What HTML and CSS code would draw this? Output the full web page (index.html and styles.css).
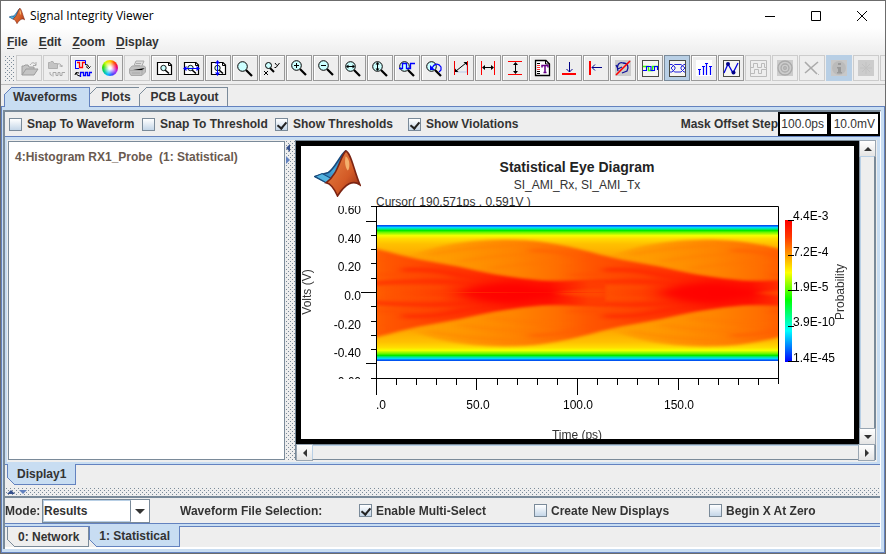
FILE: index.html
```html
<!DOCTYPE html>
<html lang="en">
<head>
<meta charset="utf-8">
<title>Signal Integrity Viewer</title>
<link rel="stylesheet" href="styles.css">
</head>
<body>
<svg class="defs" aria-hidden="true">
  <defs>
    <linearGradient id="wing" x1="0" y1="1" x2="1" y2="0"><stop offset="0" stop-color="#1c5f9c"/><stop offset=".5" stop-color="#46a8dc"/><stop offset="1" stop-color="#1d64a8"/></linearGradient>
    <linearGradient id="peak" x1="0" y1="0" x2="1" y2="1"><stop offset="0" stop-color="#e88a4a"/><stop offset=".6" stop-color="#d35a26"/><stop offset="1" stop-color="#8c2410"/></linearGradient>
    <symbol id="logo" viewBox="0 0 46 46">
      <path d="M1 26L14 22C20 19 26 4 31 1C30 14 24 22 12 32Z" fill="url(#wing)" stroke="#174a7c" stroke-width="1.5"/>
      <path d="M1 26L8 23L17 28L12 32Z" fill="#54b4e0" stroke="#174a7c"/>
      <path d="M31 1C36 2 39 20 45 34C38 29 31 33 23 45C20 38 17 33 12 32C24 23 25 8 31 1Z" fill="url(#peak)" stroke="#7c2412" stroke-width="1.6"/>
      <path d="M31 6C36 9 35 19 33 20C30 16 30 10 31 6Z" fill="#f4b06c"/>
    </symbol>
    <symbol id="mag" viewBox="0 0 26 26">
      <path d="M14 14L20 20" stroke="#000" stroke-width="2.2"/>
      <circle cx="10.500" cy="10.500" r="4.800" fill="#cff" stroke="#000"/>
    </symbol>
    <symbol id="page" viewBox="0 0 26 26">
      <path d="M6.500 7.500H18L20.500 10V19.500H6.500Z" fill="#fff" stroke="#000" stroke-width="1.200"/>
      <path d="M17.500 7.500V10.500H20.500" fill="none" stroke="#000"/>
      <path d="M14 15L18 18.500" stroke="#000" stroke-width="1.600"/>
      <circle cx="12.500" cy="13" r="2.700" fill="#cff" stroke="#000" stroke-width=".9"/>
    </symbol>
    <symbol id="box" viewBox="0 0 26 26"><rect x="5.500" y="5.500" width="16" height="16" fill="#f6f6f2" stroke="#4a4a44"/></symbol>
  </defs>
</svg>
<div class="app">
  <header class="chrome">
    <div class="titlebar">
      <svg class="app-logo"><use href="#logo"/></svg>
      <h1>Signal Integrity Viewer</h1>
      <button class="win" aria-label="Minimize"><svg viewBox="0 0 12 12"><path d="M1 6.500H11"/></svg></button>
      <button class="win" aria-label="Maximize"><svg viewBox="0 0 12 12"><path d="M1.500 1.500H10.500V10.500H1.500Z"/></svg></button>
      <button class="win" aria-label="Close"><svg viewBox="0 0 12 12"><path d="M1 1L11 11M11 1L1 11"/></svg></button>
    </div>
    <nav class="menubar">
      <button><u>F</u>ile</button><button><u>E</u>dit</button><button><u>Z</u>oom</button><button><u>D</u>isplay</button>
    </nav>
  </header>

  <div class="toolbar" role="toolbar">
    <span class="grip"></span>
    <button disabled aria-label="Open"><svg viewBox="0 0 26 26"><path d="M6 20V11H8L9 10H12L13 12H18V14M6 20L10 14H22L18 20Z" fill="#c4c4c4" stroke="#9c9c9c"/><path d="M14 10C16 7 18 7 20 10M20 7V10.500H17" fill="none" stroke="#aaa"/></svg></button>
    <button disabled aria-label="Open waveform"><svg viewBox="0 0 26 26"><path d="M5.500 13.500V7.500H7L8 6.500H10L11 8.500H14.500V13.500Z" fill="#c4c4c4" stroke="#b0b0b0"/><path d="M15 9Q18 8 18.500 12M16.500 11H20M7 17Q6 20 9 20.500M10 21.500V17.500H13V20.500H15V17.500H17V20.500H19V17.500H22" fill="none" stroke="#a8a8a8"/></svg></button>
    <button aria-label="Reload waveform"><svg viewBox="0 0 26 26" fill="none"><path d="M5.500 13.500V5.500H15.500V9" stroke="#00f"/><path d="M5 13.500H9" stroke="#00f"/><path d="M7 7.500H9.500V12.500H12.500V7.500H15" stroke="red" stroke-width="1.300"/><path d="M15 9.500Q18.500 9 18.500 12M16 11.500L18.500 13.500L20.500 11.500M6 18Q7 21 10 21M5 20L6 17.500L9 18" stroke="#000"/><path d="M10.500 22V17.500H13.500V20.500H15.500V17.500H17.500V20.500H19.500V17.500H22" stroke="#00f" stroke-width="1.300"/></svg></button>
    <button aria-label="Colors"><span class="wheel"></span></button>
    <button disabled aria-label="Print"><svg viewBox="0 0 26 26" stroke="#aaa"><path d="M9 13L12 6H20L17 13Z" fill="#ddd"/><path d="M5.500 14L8 11H20L21.500 12V17L18 20.500H7L5.500 18Z" fill="#c0c0c0"/><path d="M6 15.500H18L21 13M18 15V20M12 8.500H17M11 10.500H16M8 18H16"/></svg></button>
    <button aria-label="Zoom fit"><svg viewBox="0 0 26 26"><use href="#page"/></svg></button>
    <button aria-label="Zoom fit X"><svg viewBox="0 0 26 26"><use href="#page"/><path d="M6 13.500H21" stroke="#00f"/><path d="M5 13.500L8.500 11V16ZM22 13.500L18.500 11V16Z" fill="#00f"/></svg></button>
    <button aria-label="Zoom fit Y"><svg viewBox="0 0 26 26"><use href="#page"/><path d="M12.500 7V20" stroke="#00f"/><path d="M12.500 5L10 8.500H15ZM12.500 21L10 17.500H15Z" fill="#00f"/></svg></button>
    <button aria-label="Zoom"><svg viewBox="0 0 26 26"><use href="#mag" y="1"/></svg></button>
    <button aria-label="Zoom XY"><svg viewBox="0 0 26 26" fill="none" stroke="#000"><path d="M11 13L15 17" stroke-width="2"/><circle cx="9.500" cy="10.500" r="3" fill="#cff"/><path d="M5 16L9 20M9 16L5 20M16 8L18 10.500M20.500 8L17 12.500H15.500"/></svg></button>
    <button aria-label="Zoom in"><svg viewBox="0 0 26 26"><use href="#mag"/><path d="M8 10.500H13M10.500 8V13" stroke="#000"/></svg></button>
    <button aria-label="Zoom out"><svg viewBox="0 0 26 26"><use href="#mag"/><path d="M8 10.500H13" stroke="#000"/></svg></button>
    <button aria-label="Zoom horizontally"><svg viewBox="0 0 26 26"><use href="#mag" y="1"/><path d="M7 11.500H14" stroke="#000"/><path d="M6 11.500L8.500 9.500V13.500ZM15 11.500L12.500 9.500V13.500Z"/></svg></button>
    <button aria-label="Zoom vertically"><svg viewBox="0 0 26 26"><use href="#mag" y="1"/><path d="M10.500 8V15" stroke="#000"/><path d="M10.500 7L8.500 9.500H12.500ZM10.500 16L8.500 13.500H12.500Z"/></svg></button>
    <button aria-label="Zoom to pulse"><svg viewBox="0 0 26 26"><use href="#mag" y="1"/><path d="M5 13.500H8.500V8.500H12.500V13.500H16.500V8.500H21" fill="none" stroke="#00f" stroke-width="1.300"/></svg></button>
    <button aria-label="Undo zoom"><svg viewBox="0 0 26 26"><use href="#mag" y="1"/><path d="M9 10V15H14Z" fill="#00f"/><path d="M11 13C13 9 17 7 20 12V15L18 17" fill="none" stroke="#00f" stroke-width="1.200"/></svg></button>
    <button aria-label="Measure"><svg viewBox="0 0 26 26" fill="none"><path d="M8 17H19V8" stroke="#b8c8e8"/><path d="M6.500 6V20M19.500 6V20" stroke="#e00"/><path d="M8 16L18 8" stroke="#000"/><path d="M7 17V13.500L10.500 17ZM19 7V10.500L15.500 7Z" fill="#000"/></svg></button>
    <button aria-label="Measure X"><svg viewBox="0 0 26 26"><path d="M6.500 6V20M19.500 6V20" stroke="red"/><path d="M8 12.500H18" stroke="#000"/><path d="M7 12.500L10 10V15ZM19 12.500L16 10V15Z"/></svg></button>
    <button aria-label="Measure Y"><svg viewBox="0 0 26 26"><path d="M6 6.500H20M6 19.500H20" stroke="red"/><path d="M13.500 8V18" stroke="#000"/><path d="M13.500 7L11 10H16ZM13.500 19L11 16H16Z"/></svg></button>
    <button aria-label="Text report"><svg viewBox="0 0 26 26"><path d="M6.500 5.500H17L20.500 9V20.500H6.500Z" fill="#fff" stroke="#000" stroke-width="1.300"/><path d="M16.500 5V9H21" fill="none" stroke="#000"/><path d="M8 8.500H11M8 16.500H11M8 18.500H11" stroke="#000"/><path d="M8 10.500H11M8 12.500H11M8 14.500H11" stroke="#f33"/><path d="M13 12.500V10.500H19V12.500M16 10.500V17M14.500 17.500H17.500" fill="none" stroke="#608" stroke-width="1.500"/></svg></button>
    <button aria-label="Snap down"><svg viewBox="0 0 26 26"><path d="M6 19H20" stroke="red" stroke-width="2"/><path d="M13.500 7V17M10.500 14L13.500 17L16.500 14" fill="none" stroke="#008"/></svg></button>
    <button aria-label="Snap left"><svg viewBox="0 0 26 26"><path d="M7 6V20" stroke="red" stroke-width="2"/><path d="M19 12.500H9M12 9.500L9 12.500L12 15.500" fill="none" stroke="#008"/></svg></button>
    <button aria-label="Clear rotation"><svg viewBox="0 0 26 26" fill="none"><path d="M5 5H21V21H5Z" fill="#ccc"/><path d="M8 16C6 9 10 7 13 8C18 8 19 12 17 16L12 18M6 10L8 14L12 12" stroke="#119" stroke-width="1.300"/><path d="M6 20L20 6" stroke="red" stroke-width="1.600"/></svg></button>
    <button aria-label="Waveform view"><svg viewBox="0 0 26 26" fill="none"><use href="#box"/><path d="M6 11.500H11.500V15.500H15.500V11.500H21" stroke="#3f0" stroke-width="1.400"/><path d="M6 15.500H9.500V11.500H14V15.500H17.500V11.500H20.500V15" stroke="#00f" stroke-width="1.100"/></svg></button>
    <button class="on" aria-label="Eye view"><svg viewBox="0 0 26 26" fill="none"><use href="#box"/><path d="M6 9.500H8L11 12V14L8 17H6M21 9.500H20L17 12V14L20 17H21M7 13L10.500 9.500H17L21 13M7 13L10.500 17H17L21 13" stroke="#22d"/></svg></button>
    <button aria-label="Stem view"><svg viewBox="0 0 26 26"><path d="M5 5H21V21H5Z" fill="#fff"/><path d="M8.500 20V14M12.500 20V11M15.500 20V8M19.500 20V11M7 14.500H10M11 11.500H14M14 8.500H17M18 11.500H21" stroke="#00f" stroke-width="1.200"/></svg></button>
    <button aria-label="Line view"><svg viewBox="0 0 26 26"><use href="#box"/><path d="M6 18L10 9L15 18L20 8" fill="none" stroke="#00d" stroke-width="1.300"/><circle cx="10" cy="9" r="2" fill="#008"/><circle cx="15.500" cy="17.500" r="2" fill="#008"/></svg></button>
    <button disabled aria-label="Pattern"><svg viewBox="0 0 26 26" fill="none" stroke="#bbb"><path d="M5.500 5.500H21.500V21.500H5.500Z"/><path d="M6 12.500H8.500V8.500H12.500V12.500H16.500V8.500H19.500V12.500H21M6 18.500H9.500V14.500H13.500V18.500H16.500V14.500H21"/></svg></button>
    <button disabled aria-label="Target"><svg viewBox="0 0 26 26" fill="none"><path d="M5 5H21V21H5Z" fill="#ccc"/><g stroke="#aaa" stroke-width="1.300"><circle cx="13" cy="13" r="7"/><circle cx="13" cy="13" r="4"/><circle cx="13" cy="13" r="1.300"/></g></svg></button>
    <button disabled aria-label="Delete"><svg viewBox="0 0 26 26" fill="none"><path d="M6 7L18 19M19 7L6 18" stroke="#aaa" stroke-width="1.600"/><path d="M19 19.500H20" stroke="#bbb"/></svg></button>
    <button disabled class="on" aria-label="Information"><svg viewBox="0 0 26 26"><path d="M5 5H21V21H5Z" fill="#c8c8c8"/><circle cx="13" cy="13" r="7" fill="#bbb"/><path d="M12 8H15V10H12ZM11 12H15V17H16V18.500H11V17H12V13.500H11Z" fill="#999"/></svg></button>
    <button disabled aria-label="Stop"><svg viewBox="0 0 26 26"><path d="M5 5H21V21H5Z" fill="#ccc"/><path d="M9 9L17 17M17 9L9 17M13 7V19M7 13H19" stroke="#c2c2c2"/></svg></button>
    <button disabled aria-label="More"></button>
  </div>

  <div class="tabs top" role="tablist">
    <button class="tab active" role="tab">Waveforms</button><button class="tab" role="tab">Plots</button><button class="tab" role="tab">PCB Layout</button>
  </div>

  <main class="pane">
    <div class="inner">
      <div class="options">
        <label><input type="checkbox">Snap To Waveform</label>
        <label><input type="checkbox">Snap To Threshold</label>
        <label><input type="checkbox" checked>Show Thresholds</label>
        <label><input type="checkbox" checked>Show Violations</label>
        <div class="mask"><span>Mask Offset Step</span><input type="text" value="100.0ps" aria-label="Mask offset time"><input type="text" value="10.0mV" aria-label="Mask offset voltage"></div>
      </div>

      <section class="display">
        <div class="list">4:Histogram RX1_Probe&nbsp; (1: Statistical)</div>
        <div class="vsplit"><i class="arrow left"></i><i class="arrow right"></i></div>
        <div class="viewer">
          <div class="plot">
            <svg class="chart" viewBox="0 0 553 293" preserveAspectRatio="xMinYMin meet" role="img" aria-label="Statistical Eye Diagram">
              <defs>
                <linearGradient id="rows" x1="0" y1="75" x2="0" y2="483" gradientUnits="userSpaceOnUse">
                  <stop offset="0" stop-color="#0038e8"/><stop offset=".010" stop-color="#0080ff"/><stop offset=".018" stop-color="#00d8f8"/><stop offset=".030" stop-color="#00e890"/><stop offset=".040" stop-color="#00e800"/><stop offset=".055" stop-color="#70f800"/><stop offset=".078" stop-color="#f4ff00"/><stop offset=".100" stop-color="#ffdc00"/><stop offset=".140" stop-color="#ffc000"/><stop offset=".250" stop-color="#ffa000"/><stop offset=".500" stop-color="#ff8000"/>
                  <stop offset=".750" stop-color="#ffa000"/><stop offset=".860" stop-color="#ffc000"/><stop offset=".900" stop-color="#ffdc00"/><stop offset=".922" stop-color="#f4ff00"/><stop offset=".945" stop-color="#70f800"/><stop offset=".960" stop-color="#00e800"/><stop offset=".970" stop-color="#00e890"/><stop offset=".982" stop-color="#00d8f8"/><stop offset=".990" stop-color="#0080ff"/><stop offset="1" stop-color="#0038e8"/>
                </linearGradient>
                <linearGradient id="lens" x1="60" y1="0" x2="1260" y2="0" gradientUnits="userSpaceOnUse">
                  <stop offset="0" stop-color="#ffa600"/><stop offset=".150" stop-color="#ff9a00"/><stop offset=".300" stop-color="#ff8600"/><stop offset=".420" stop-color="#ff6e00"/><stop offset=".500" stop-color="#ff5600"/><stop offset=".600" stop-color="#ff4400"/><stop offset=".720" stop-color="#ff2e00"/><stop offset=".820" stop-color="#ff1800"/><stop offset=".900" stop-color="#ff1000"/><stop offset=".960" stop-color="#ff2800"/><stop offset="1" stop-color="#ff3c00"/>
                </linearGradient>
                <filter id="soft" x="-10%" y="-30%" width="120%" height="160%" color-interpolation-filters="sRGB"><feGaussianBlur stdDeviation="5"/></filter>
                <filter id="streak" x="-10%" y="-50%" width="120%" height="200%" color-interpolation-filters="sRGB"><feGaussianBlur stdDeviation="14 5"/></filter>
                <filter id="softer" x="-20%" y="-60%" width="140%" height="220%" color-interpolation-filters="sRGB"><feGaussianBlur stdDeviation="26 9"/></filter>
                <clipPath id="heatclip"><rect x="20" y="75" width="1205" height="408"/></clipPath>
                <clipPath id="above"><rect x="70" y="40" width="200" height="20"/></clipPath>
                <clipPath id="rowclip"><rect x="0" y="60" width="75" height="173"/></clipPath>
                <g id="wave">
                  <path d="M50 205C150 138 280 121 400 119C500 119 570 132 660 156C750 183 820 188 900 207C960 221 1040 236 1120 242C1180 244 1250 240 1310 246L1310 300L50 300Z" fill="url(#lens)" filter="url(#soft)"/>
                  <g fill="none" filter="url(#streak)">
                    <path d="M180 164Q300 140 430 137M270 184Q380 165 500 162" stroke="#ff7800" stroke-width="7" opacity=".400"/>
                    <path d="M360 205Q480 187 600 186" stroke="#ff7200" stroke-width="8" opacity=".350"/>
                    <path d="M480 152Q550 147 635 172" stroke="#ff5c00" stroke-width="12" opacity=".550"/>
                    <path d="M590 252Q680 244 780 244T960 256" stroke="#ff2400" stroke-width="14" opacity=".600"/>
                    <path d="M700 210Q790 206 860 222T980 242" stroke="#ff2000" stroke-width="14" opacity=".550"/>
                    <path d="M600 225Q680 222 750 224T840 236" stroke="#ff4c00" stroke-width="7" opacity=".500"/>
                    <path d="M640 270Q720 262 830 262" stroke="#ff5400" stroke-width="9" opacity=".500"/>
                  </g>
                  <path d="M860 279Q930 246 1030 246Q1110 256 1180 279Q1110 302 1030 312Q930 312 860 279Z" fill="#f00" opacity=".900" filter="url(#softer)"/>
                  <path d="M1160 279Q1220 268 1310 266V292Q1220 290 1160 279Z" fill="#ff4c00" opacity=".800" filter="url(#streak)"/>
                </g>
                <g id="half"><use href="#wave" x="604"/><use href="#wave"/><use href="#wave" x="-604"/></g>
                <clipPath id="halfclip"><rect x="0" y="60" width="1250" height="220"/></clipPath>
                <linearGradient id="scale" x1="0" y1="0" x2="0" y2="1"><stop offset="0" stop-color="red"/><stop offset=".120" stop-color="#ff3800"/><stop offset=".370" stop-color="#ff0"/><stop offset=".560" stop-color="#0f0"/><stop offset=".780" stop-color="#0ff"/><stop offset="1" stop-color="#00f"/></linearGradient>
              </defs>
              <use href="#logo" x="13" y="4" width="47" height="47"/>
              <text class="heading" x="276" y="26" text-anchor="middle">Statistical Eye Diagram</text>
              <text class="soft" x="276" y="43" text-anchor="middle">SI_AMI_Rx, SI_AMI_Tx</text>
              <g clip-path="url(#above)"><text class="soft" x="75" y="60">Cursor( 190.571ps , 0.591V )</text></g>
              <g transform="translate(69 54) scale(.33333)" clip-path="url(#heatclip)">
                <rect x="20" y="75" width="1205" height="408" fill="url(#rows)"/>
                <g clip-path="url(#halfclip)"><use href="#half"/></g>
                <g transform="translate(0 558) scale(1 -1)"><g clip-path="url(#halfclip)"><use href="#half"/></g></g>
              </g>
              <g class="axis">
                <path d="M70 60.500H477.500V238M75.500 60V249M70 232.500H478"/>
                <path d="M65 75.500H75M70 89.500H75M70 103.500H75M70 117.500H75M70 132.500H75M60 146.500H75M70 160.500H75M70 175.500H75M70 189.500H75M70 203.500H75M65 217.500H75"/>
                <path d="M95.500 232V239M115.500 232V239M135.500 232V239M155.500 232V239M175.500 232V244M196.500 232V239M216.500 232V239M236.500 232V239M256.500 232V239M276.500 232V249M296.500 232V239M316.500 232V239M336.500 232V239M357.500 232V239M377.500 232V244M397.500 232V239M417.500 232V239M437.500 232V239M457.500 232V239"/>
              </g>
              <g text-anchor="end" clip-path="url(#rowclip)">
                <text x="60" y="68">0.60</text><text x="60" y="97">0.40</text><text x="60" y="125">0.20</text><text x="60" y="154">0.0</text><text x="60" y="183">-0.20</text><text x="60" y="211">-0.40</text>
              </g>
              <svg x="30" y="230" width="40" height="3"><text x="30" y="10" text-anchor="end">-0.60</text></svg>
              <g text-anchor="middle"><text x="80" y="263">.0</text><text x="177" y="263">50.0</text><text x="277" y="263">100.0</text><text x="378" y="263">150.0</text></g>
              <text class="soft" x="276" y="293" text-anchor="middle">Time (ps)</text>
              <text class="soft" transform="translate(10 146) rotate(-90)" text-anchor="middle">Volts (V)</text>
              <rect x="484" y="74" width="7" height="142" fill="url(#scale)"/>
              <path class="axis" d="M487 74.500H493M487 109.500H493M487 144.500H493M487 180.500H493M487 215.500H493"/>
              <text x="492" y="74">4.4E-3</text><text x="492" y="110">7.2E-4</text><text x="492" y="145">1.9E-5</text><text x="492" y="180">3.9E-10</text><text x="492" y="216">1.4E-45</text>
              <text class="soft" transform="translate(543 146) rotate(-90)" text-anchor="middle">Probability</text>
            </svg>
          </div>
          <div class="scroll v"><button aria-label="Scroll up"><i class="arrow up"></i></button><span></span><button aria-label="Scroll down"><i class="arrow down"></i></button></div>
          <div class="scroll h"><button aria-label="Scroll left"><i class="arrow left"></i></button><span></span><button aria-label="Scroll right"><i class="arrow right"></i></button></div>
        </div>
      </section>
      <div class="tabs bottom" role="tablist"><button class="tab active" role="tab">Display1</button></div>

      <div class="hsplit"><i class="arrow up"></i><i class="arrow down"></i></div>
      <div class="mode">
        <label for="mode">Mode:</label>
        <div class="combo"><select id="mode"><option>Results</option></select><i class="arrow down"></i></div>
        <span class="caption">Waveform File Selection:</span>
        <label><input type="checkbox" checked>Enable Multi-Select</label>
        <label><input type="checkbox">Create New Displays</label>
        <label><input type="checkbox">Begin X At Zero</label>
      </div>
      <div class="rule"></div>
      <div class="tabs bottom last" role="tablist"><button class="tab" role="tab">0: Network</button><button class="tab active" role="tab">1: Statistical</button></div>
    </div>
  </main>
</div>
</body>
</html>
```
FILE: styles.css
```css
:root {
  --face: #eee;
  --blue: #6382bf;
  --light: #c8ddf2;
  --steel: #7a8a99;
  --ink: #333;
}
* { box-sizing: border-box; }
body {
  margin: 0;
  font: bold 12px/16px "Liberation Sans", Arial, sans-serif;
  color: var(--ink);
  background: var(--face);
}
button, input, select { font: inherit; color: inherit; margin: 0; padding: 0; }
.defs { position: absolute; width: 0; height: 0; }
.app {
  height: 100vh;
  display: flex;
  flex-direction: column;
  border: 1px solid #6c6c6c;
  overflow: hidden;
}

/* title and menu */
.chrome { background: linear-gradient(#fff 50%, var(--face)); }
.titlebar { height: 30px; display: flex; align-items: center; padding-left: 8px; }
.app-logo { width: 16px; height: 16px; margin-right: 5px; }
.titlebar h1 { flex: 1; margin: 0; font: 12px/16px "Open Sans", sans-serif; color: #000; }
.win { width: 46px; height: 30px; border: 0; background: none; }
.win svg { width: 12px; height: 12px; fill: none; stroke: #000; display: block; margin: auto; }
.menubar { height: 23px; display: flex; gap: 11px; padding: 3px 6px 4px; }
.menubar button { border: 0; background: none; }
u { text-underline-offset: 2px; }

/* toolbar */
.toolbar {
  height: 31px;
  flex: none;
  display: flex;
  gap: 1px;
  padding: 1px 0 3px 3px;
  border-bottom: 1px solid #bbb;
  overflow: hidden;
}
.toolbar button {
  flex: none;
  width: 26px;
  height: 26px;
  border: 1px solid #999;
  box-shadow: inset 1px 1px #fff;
  background: var(--face);
}
.toolbar button:disabled { border-color: #ccc; box-shadow: none; }
.toolbar .on { background: #b8cfe5; border-color: var(--steel); box-shadow: none; }
.toolbar .on:disabled { border-color: #b8cfe5; }
.toolbar svg { display: block; width: 26px; height: 26px; margin: -1px; }
.grip, .vsplit, .hsplit {
  background-image: conic-gradient(at 1px 1px, transparent 75%, #7a8a99 75%), conic-gradient(at 1px 1px, transparent 75%, #7a8a99 75%);
  background-size: 4px 4px;
  background-position: 1px 1px, 3px 3px;
}
.grip { flex: none; width: 10px; margin-right: 1px; }
.wheel {
  display: block;
  width: 16px;
  height: 16px;
  margin: auto;
  border-radius: 50%;
  background: radial-gradient(#fff 10%, transparent 60%), conic-gradient(#fc0, #f40, #e06, #a3e, #44f, #0bf, #0c8, #3d0, #cf0, #fc0);
}

/* tabs */
.tabs { display: flex; align-items: flex-start; position: relative; }
.tabs.top { height: 21px; padding: 2px 0 0 3px; flex: none; }
.tab {
  position: relative;
  height: 19px;
  padding: 0 8px 0 11px;
  border: 1px solid var(--steel);
  border-left: 0;
  border-bottom: 0;
  background: var(--face);
  white-space: nowrap;
}
.tab.active { background: var(--light); border-color: var(--blue); border-left: 1px solid var(--blue); }
.tab::before {
  content: "";
  position: absolute;
  left: -1px;
  top: -1px;
  width: 8px;
  height: 8px;
  background: linear-gradient(135deg, var(--face) 5px, var(--steel) 5px 6px, transparent 6px);
}
.tab.active::before { background: linear-gradient(135deg, var(--face) 5px, var(--blue) 5px 6px, transparent 6px); }
.top .active { height: 20px; padding: 0 12px 1px 8px; z-index: 1; }
.bottom { height: 22px; padding-left: 2px; }
.bottom .tab { height: 20px; padding: 0 9px 0 10px; border: 1px solid var(--steel); border-top: 0; }
.bottom .tab.active { height: 21px; margin-top: -1px; padding: 0 9px; border-color: var(--blue); }
.bottom .tab::before {
  top: auto;
  bottom: -1px;
  background: linear-gradient(45deg, var(--face) 5px, var(--steel) 5px 6px, transparent 6px);
}
.bottom .tab.active::before { background: linear-gradient(45deg, var(--face) 5px, var(--blue) 5px 6px, transparent 6px); }

/* main pane */
.pane {
  flex: 1;
  min-height: 0;
  display: flex;
  border: 1px solid var(--blue);
  padding: 3px 3px 3px 1px;
  background: var(--light);
}
.inner {
  flex: 1;
  min-width: 0;
  display: flex;
  flex-direction: column;
  border-top: 2px solid var(--steel);
  border-left: 2px solid var(--steel);
  border-right: 1px solid #fff;
  background: var(--face);
}
.options { height: 24px; flex: none; display: flex; align-items: center; padding-left: 4px; }
.options > label { width: 133px; }
label { display: flex; align-items: center; gap: 5px; white-space: nowrap; }
input[type="checkbox"] {
  appearance: none;
  width: 13px;
  height: 13px;
  border: 1px solid var(--steel);
  background: linear-gradient(#fff, #c4d6e8);
  position: relative;
}
input[type="checkbox"]:checked::after {
  content: "";
  position: absolute;
  left: 3px;
  top: 1px;
  width: 4px;
  height: 7px;
  border: solid #222;
  border-width: 0 2px 2px 0;
  transform: rotate(40deg);
}
.mask { margin-left: auto; display: flex; align-items: center; }
.mask input {
  width: 51px;
  height: 24px;
  border: 2px solid #000;
  background: #fff;
  font-weight: normal;
  text-align: right;
  padding-right: 3px;
}

.display {
  flex: 1;
  min-height: 0;
  display: flex;
  border: solid var(--blue);
  border-width: 1px 0;
  padding: 3px 0 4px;
  background: var(--face);
  box-shadow: inset 0 3px var(--light), inset 0 -2px var(--light), inset 2px 0 var(--light), inset -3px 0 var(--light);
}
.list {
  width: 277px;
  flex: none;
  margin: 1px 0 0 3px;
  padding: 7px 6px;
  border: 1px solid var(--steel);
  background: #fff;
  color: #6a5a50;
}
.vsplit { width: 10px; flex: none; display: flex; flex-direction: column; align-items: center; gap: 4px; padding-top: 4px; }
.viewer {
  flex: 1;
  min-width: 0;
  margin-right: 4px;
  display: grid;
  grid-template: minmax(0, 1fr) 16px / minmax(0, 1fr) 16px;
  border: 1px solid var(--steel);
  border-bottom: 0;
}
.plot { border: 5px solid #000; background: #fff; overflow: hidden; }
.chart { display: block; width: 100%; height: 100%; font: 12px "Liberation Sans", Arial, sans-serif; fill: #000; }
.chart .heading { font-size: 14px; font-weight: bold; fill: #222; }
.chart .soft { fill: #333; }
.axis { fill: none; stroke: #000; }
.scroll { display: flex; background: var(--face); border: 1px solid var(--steel); }
.scroll.v { flex-direction: column; border-width: 0 1px; }
.scroll.h { grid-column: 1 / 3; }
.scroll span { flex: 1; box-shadow: inset 1px 1px #b8cfe5; }
.scroll button {
  width: 15px;
  height: 15px;
  flex: none;
  border: 0;
  background: linear-gradient(#fff, #e4e4e4);
  display: flex;
  align-items: center;
  justify-content: center;
  outline: 1px solid #9aa6b2;
}
.arrow { width: 0; height: 0; border: 4px solid transparent; flex: none; }
.arrow.up { border-top: 0; border-bottom-color: var(--ink); }
.arrow.down { border-bottom: 0; border-top-color: var(--ink); }
.arrow.left { border-left: 0; border-right-color: var(--ink); }
.arrow.right { border-right: 0; border-left-color: var(--ink); }
.vsplit .arrow { margin-right: 4px; }
.vsplit .arrow.left { border-right-color: #35508c; }
.vsplit .arrow.right { border-left-color: var(--blue); }
.hsplit .arrow.up { border-bottom-color: #35508c; }
.hsplit .arrow.down { border-top-color: var(--blue); }

/* lower section */
.hsplit { height: 9px; flex: none; display: flex; align-items: center; gap: 4px; padding-left: 2px; }
.mode { height: 27px; flex: none; display: flex; align-items: center; border-top: 2px solid var(--steel); }
.mode > label { width: 175px; flex: none; gap: 4px; }
.mode > label:first-child { width: 37px; }
.mode > label:last-child { width: auto; }
.combo {
  width: 108px;
  flex: none;
  height: 24px;
  position: relative;
  background: #fff;
  border: 1px solid var(--steel);
}
.combo select { appearance: none; width: 88px; height: 22px; border: 1px solid #b8cfe5; border-right: 1px solid var(--steel); background: #fff; border-radius: 0; }
.combo .arrow { position: absolute; right: 4px; top: 9px; border-width: 5px 5px 0; }
.caption { width: 209px; flex: none; padding-left: 30px; white-space: nowrap; }
.rule { height: 3px; flex: none; background: var(--light); border-top: 1px solid var(--blue); }
.last { border-top: 1px solid var(--blue); height: 23px; flex: none; border-bottom: 2px solid #fff; }
```
